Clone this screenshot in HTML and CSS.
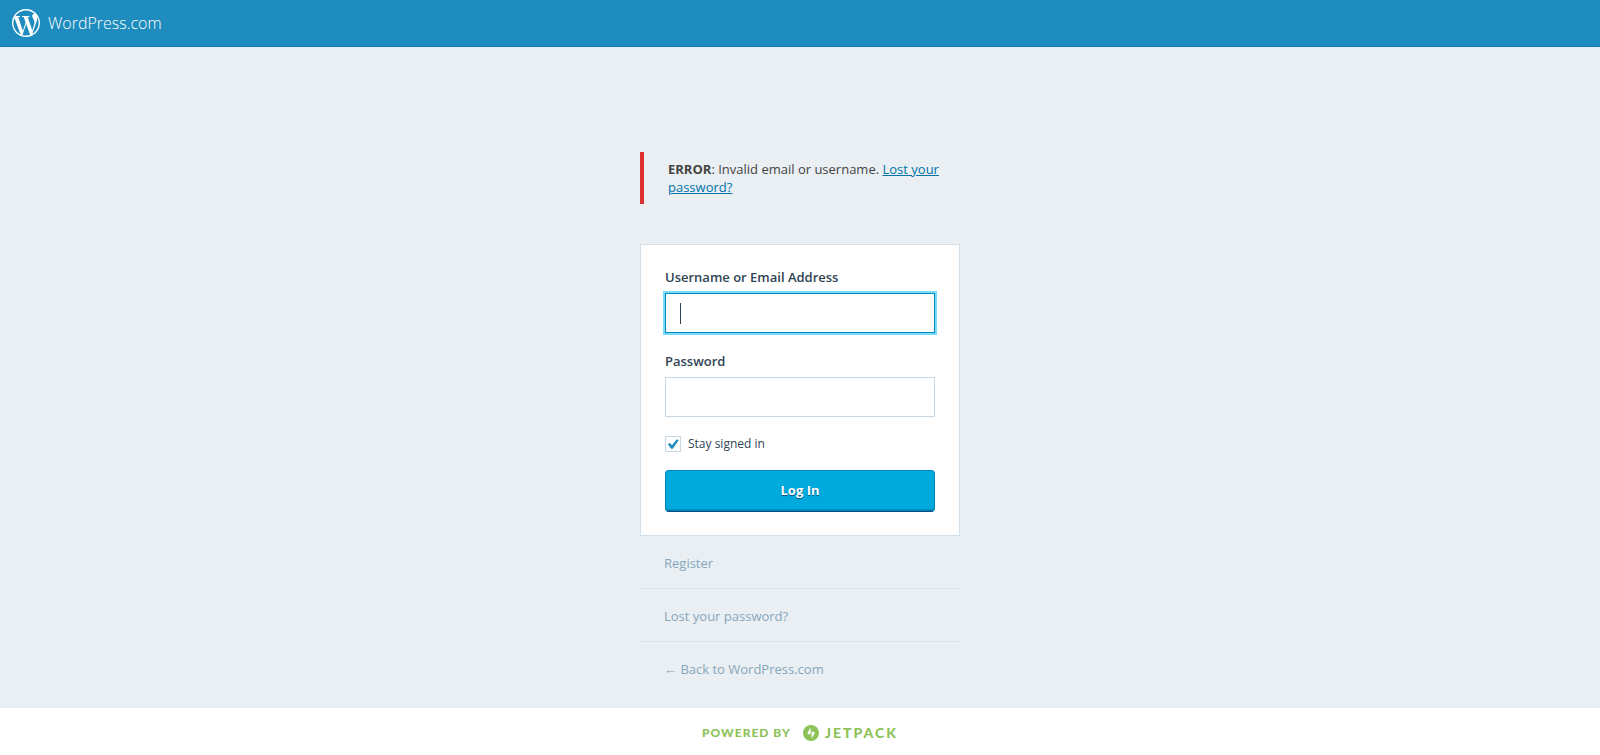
FILE: index.html
```html
<!DOCTYPE html>
<html lang="en">
<head>
<meta charset="utf-8">
<meta name="viewport" content="width=device-width, initial-scale=1">
<title>WordPress.com — Log In</title>
<link rel="stylesheet" href="styles.css">
</head>
<body>
<header class="masthead">
  <a class="brand" href="#">
    <svg class="brand-mark" viewBox="0 0 24 24" aria-hidden="true"><path fill="currentColor" d="M21.469 6.825c.84 1.537 1.318 3.3 1.318 5.175 0 3.979-2.156 7.456-5.363 9.325l3.295-9.527c.615-1.54.82-2.771.82-3.864 0-.405-.026-.78-.07-1.11m-7.981.105c.647-.03 1.232-.105 1.232-.105.582-.075.514-.93-.067-.899 0 0-1.755.135-2.88.135-1.064 0-2.85-.15-2.85-.15-.585-.03-.661.855-.075.885 0 0 .54.061 1.125.09l1.68 4.605-2.37 7.08L5.354 6.9c.649-.03 1.234-.1 1.234-.1.585-.075.516-.93-.065-.896 0 0-1.746.138-2.874.138-.2 0-.438-.008-.69-.015C4.911 3.15 8.235 1.215 12 1.215c2.809 0 5.365 1.072 7.286 2.833-.046-.003-.091-.009-.141-.009-1.06 0-1.812.923-1.812 1.914 0 .89.513 1.643 1.06 2.531.411.72.89 1.643.89 2.977 0 .915-.354 1.994-.821 3.479l-1.075 3.585-3.9-11.61.001.014zM12 22.784c-1.059 0-2.081-.153-3.048-.437l3.237-9.406 3.315 9.087c.024.053.05.101.078.149-1.12.393-2.325.609-3.582.609M1.211 12c0-1.564.336-3.05.935-4.39L7.29 21.709C3.694 19.96 1.212 16.271 1.211 12M12 0C5.385 0 0 5.385 0 12s5.385 12 12 12 12-5.385 12-12S18.615 0 12 0"/></svg>
    <span>WordPress.com</span>
  </a>
</header>
<main class="login">
  <p class="error" role="alert"><strong>ERROR</strong>: Invalid email or username. <a href="#">Lost your password?</a></p>
  <form class="card">
    <label class="label" for="user">Username or Email Address</label>
    <div class="field">
      <input class="input input-active" id="user" type="text">
      <span class="caret" aria-hidden="true"></span>
    </div>
    <label class="label" for="pass">Password</label>
    <div class="field">
      <input class="input" id="pass" type="password">
    </div>
    <div class="remember">
      <span class="check">
        <input class="check-box" id="remember" type="checkbox" checked>
        <svg class="check-mark" viewBox="0 0 16 16" aria-hidden="true"><path fill="#1e8cbe" d="M2.800 8.300 4.800 7 7 9.200 11.500 3.600 13.800 4 7.800 12.800H6.200z"/></svg>
      </span>
      <label for="remember">Stay signed in</label>
    </div>
    <button class="submit" type="submit">Log In</button>
  </form>
  <nav class="links">
    <a href="#">Register</a>
    <a href="#">Lost your password?</a>
    <a href="#">← Back to WordPress.com</a>
  </nav>
</main>
<footer class="footer">
  <a class="powered" href="#">
    <span>POWERED BY</span>
    <span class="jetpack">
      <svg class="jetpack-mark" viewBox="0 0 16 16" aria-hidden="true"><circle cx="8" cy="8" r="8" fill="#8cc258"/><path fill="#fff" d="M7.600 2.600V9.500L5 8.900Q4.100 8.600 4.500 7.800zM8.600 13.400V6.500L11.200 7.100Q12.100 7.400 11.700 8.200z"/></svg>
      <span>JETPACK</span>
    </span>
  </a>
</footer>
</body>
</html>
```
FILE: styles.css
```css
* {
  box-sizing: border-box;
}

body {
  margin: 0;
  min-height: 100vh;
  display: flex;
  flex-direction: column;
  background: #e9eff3;
  color: #444;
  font: 13px/18px "Open Sans", "Noto Sans", sans-serif;
}

.masthead {
  display: flex;
  align-items: center;
  height: 47px;
  padding: 0 12px;
  background: #1e8cbe;
  border-bottom: 1px solid #0d7ab0;
}

.brand {
  display: flex;
  align-items: center;
  gap: 8px;
  color: #fff;
  font: 300 16px/24px "Open Sans", sans-serif;
  text-decoration: none;
}

.brand-mark {
  width: 28px;
  height: 28px;
}

.login {
  flex: 1;
  width: 100%;
  max-width: 320px;
  margin: 0 auto;
  padding-top: 105px;
}

.error {
  margin: 0 0 40px;
  padding: 8px 16px 8px 24px;
  border-left: 4px solid #dc3232;
}

.error a {
  color: #0073aa;
}

.card {
  padding: 23px 24px;
  background: #fff;
  border: 1px solid #d3dfe9;
}

.label {
  display: block;
  margin-bottom: 7px;
  color: #2e4453;
  font-size: 13px;
  font-weight: 600;
}

.field {
  position: relative;
  margin-bottom: 19px;
}

.input {
  display: block;
  width: 100%;
  height: 40px;
  padding: 8px 14px;
  border: 1px solid #c8d7e1;
  border-radius: 0;
  outline: none;
  background: #fff;
  color: #2e4453;
  font: inherit;
  font-size: 16px;
}

.input-active {
  border-color: #0087be;
  box-shadow: 0 0 0 2px #78dcfa;
}

.caret {
  position: absolute;
  top: 10px;
  left: 15px;
  width: 1px;
  height: 21px;
  background: #2e4453;
}

.remember {
  display: flex;
  align-items: center;
  gap: 7px;
  margin-bottom: 18px;
  color: #2e4453;
  font-size: 12px;
  line-height: 16px;
}

.check {
  display: grid;
}

.check-box {
  grid-area: 1 / 1;
  width: 16px;
  height: 16px;
  margin: 0;
  appearance: none;
  border: 1px solid #c8d7e1;
  background: #fff;
}

.check-mark {
  grid-area: 1 / 1;
  width: 16px;
  height: 16px;
  pointer-events: none;
}

.submit {
  display: block;
  width: 100%;
  height: 42px;
  padding: 0 14px 2px;
  border: 1px solid #0087be;
  border-bottom-color: #005082;
  border-radius: 4px;
  background: #00aadc;
  box-shadow: inset 0 -2px 0 #0087be;
  color: #fff;
  font: inherit;
  font-weight: 700;
  text-shadow: 0 1px 1px #005082;
}

.links a {
  display: block;
  padding: 18px 24px 16px;
  color: #87a6bc;
  text-decoration: none;
}

.links a + a {
  border-top: 1px solid #d9e4ec;
}

.footer {
  display: flex;
  align-items: center;
  justify-content: center;
  height: 47px;
  padding-top: 2px;
  background: #fff;
}

.powered,
.jetpack {
  display: flex;
  align-items: center;
}

.powered {
  gap: 12px;
  color: #8cc258;
  font: 900 12px/16px Lato, sans-serif;
  letter-spacing: 1px;
  text-decoration: none;
}

.jetpack {
  gap: 6px;
  font-size: 14px;
  letter-spacing: 2px;
}

.jetpack-mark {
  width: 16px;
  height: 16px;
}
```
